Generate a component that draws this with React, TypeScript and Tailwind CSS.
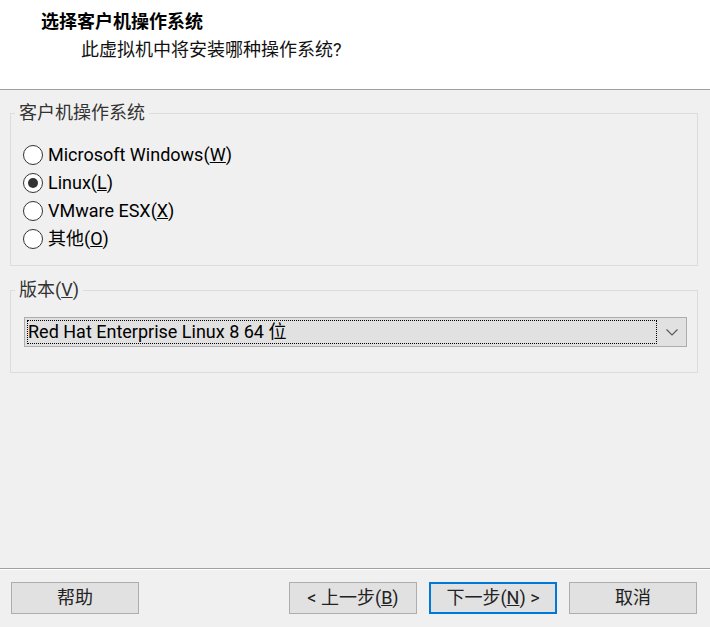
import React from "react";

const font = { fontFamily: 'Roboto, "Noto Sans CJK SC", sans-serif' };

function Radio({ checked, children }: { checked?: boolean; children: React.ReactNode }) {
  return (
    <div className="h-[28px] flex items-center gap-[5px]">
      <span className="w-[20px] h-[20px] rounded-full border border-[#333] bg-white flex items-center justify-center">
        {checked && <span className="w-[10px] h-[10px] rounded-full bg-[#333]" />}
      </span>
      <span className="text-[18px] leading-[24px] text-black">{children}</span>
    </div>
  );
}

function Button({ primary, children }: { primary?: boolean; children: React.ReactNode }) {
  return (
    <button
      className={
        primary
          ? "w-[128px] h-[32px] bg-[#e1e1e1] border-2 border-[#0078d7] text-[18px] leading-[24px] text-[#222] flex items-center justify-center"
          : "w-[128px] h-[32px] bg-[#e1e1e1] border border-[#adadad] text-[18px] leading-[24px] text-[#222] flex items-center justify-center"
      }
    >
      {children}
    </button>
  );
}

export default function App() {
  return (
    <div className="w-[710px] h-[627px] bg-[#f0f0f0] flex flex-col" style={font}>
      <div className="h-[90px] bg-white border-b border-[#a0a0a0] pl-[41px] pt-[10px]">
        <div className="text-[18px] leading-[24px] font-bold text-black">选择客户机操作系统</div>
        <div className="text-[18px] leading-[24px] text-[#111] pl-[40px] mt-[4px]">此虚拟机中将安装哪种操作系统?</div>
      </div>

      <div className="flex-1 pl-[10px] pr-[12px] pt-[13px]">
        <fieldset className="border border-[#dcdcdc] pl-[12px] pt-[18px] pb-[12px]">
          <legend className="-ml-[8px] px-[4px] text-[18px] leading-[20px] text-[#333]">客户机操作系统</legend>
          <Radio>
            Microsoft Windows(<u>W</u>)
          </Radio>
          <Radio checked>
            Linux(<u>L</u>)
          </Radio>
          <Radio>
            VMware ESX(<u>X</u>)
          </Radio>
          <Radio>
            其他(<u>O</u>)
          </Radio>
        </fieldset>

        <fieldset className="mt-[14px] border border-[#dcdcdc] pl-[13px] pr-[10px] pt-[17px] pb-[25px]">
          <legend className="-ml-[9px] px-[4px] text-[18px] leading-[20px] text-[#333]">
            版本(<u>V</u>)
          </legend>
          <div className="h-[30px] bg-[#e1e1e1] border border-[#adadad] flex items-center pl-[2px]">
            <div className="flex-1 h-[24px] border border-dotted border-black flex items-center text-[18px] leading-[22px] text-black">
              Red Hat Enterprise Linux 8 64 位
            </div>
            <div className="w-[29px] flex items-center justify-center">
              <svg width="12" height="7" viewBox="0 0 12 7">
                <path d="M0.5 0.5 L6 6 L11.5 0.5" fill="none" stroke="#5a5a5a" strokeWidth="1.2" />
              </svg>
            </div>
          </div>
        </fieldset>
      </div>

      <div className="h-[59px] border-t border-[#a0a0a0]">
        <div className="h-px bg-white" />
        <div className="mt-[12px] pl-[11px] pr-[13px] flex items-center">
          <Button>帮助</Button>
          <div className="flex-1" />
          <div className="flex gap-[12px]">
            <Button>
              &lt; 上一步(<u>B</u>)
            </Button>
            <Button primary>
              下一步(<u>N</u>) &gt;
            </Button>
            <Button>取消</Button>
          </div>
        </div>
      </div>
    </div>
  );
}
